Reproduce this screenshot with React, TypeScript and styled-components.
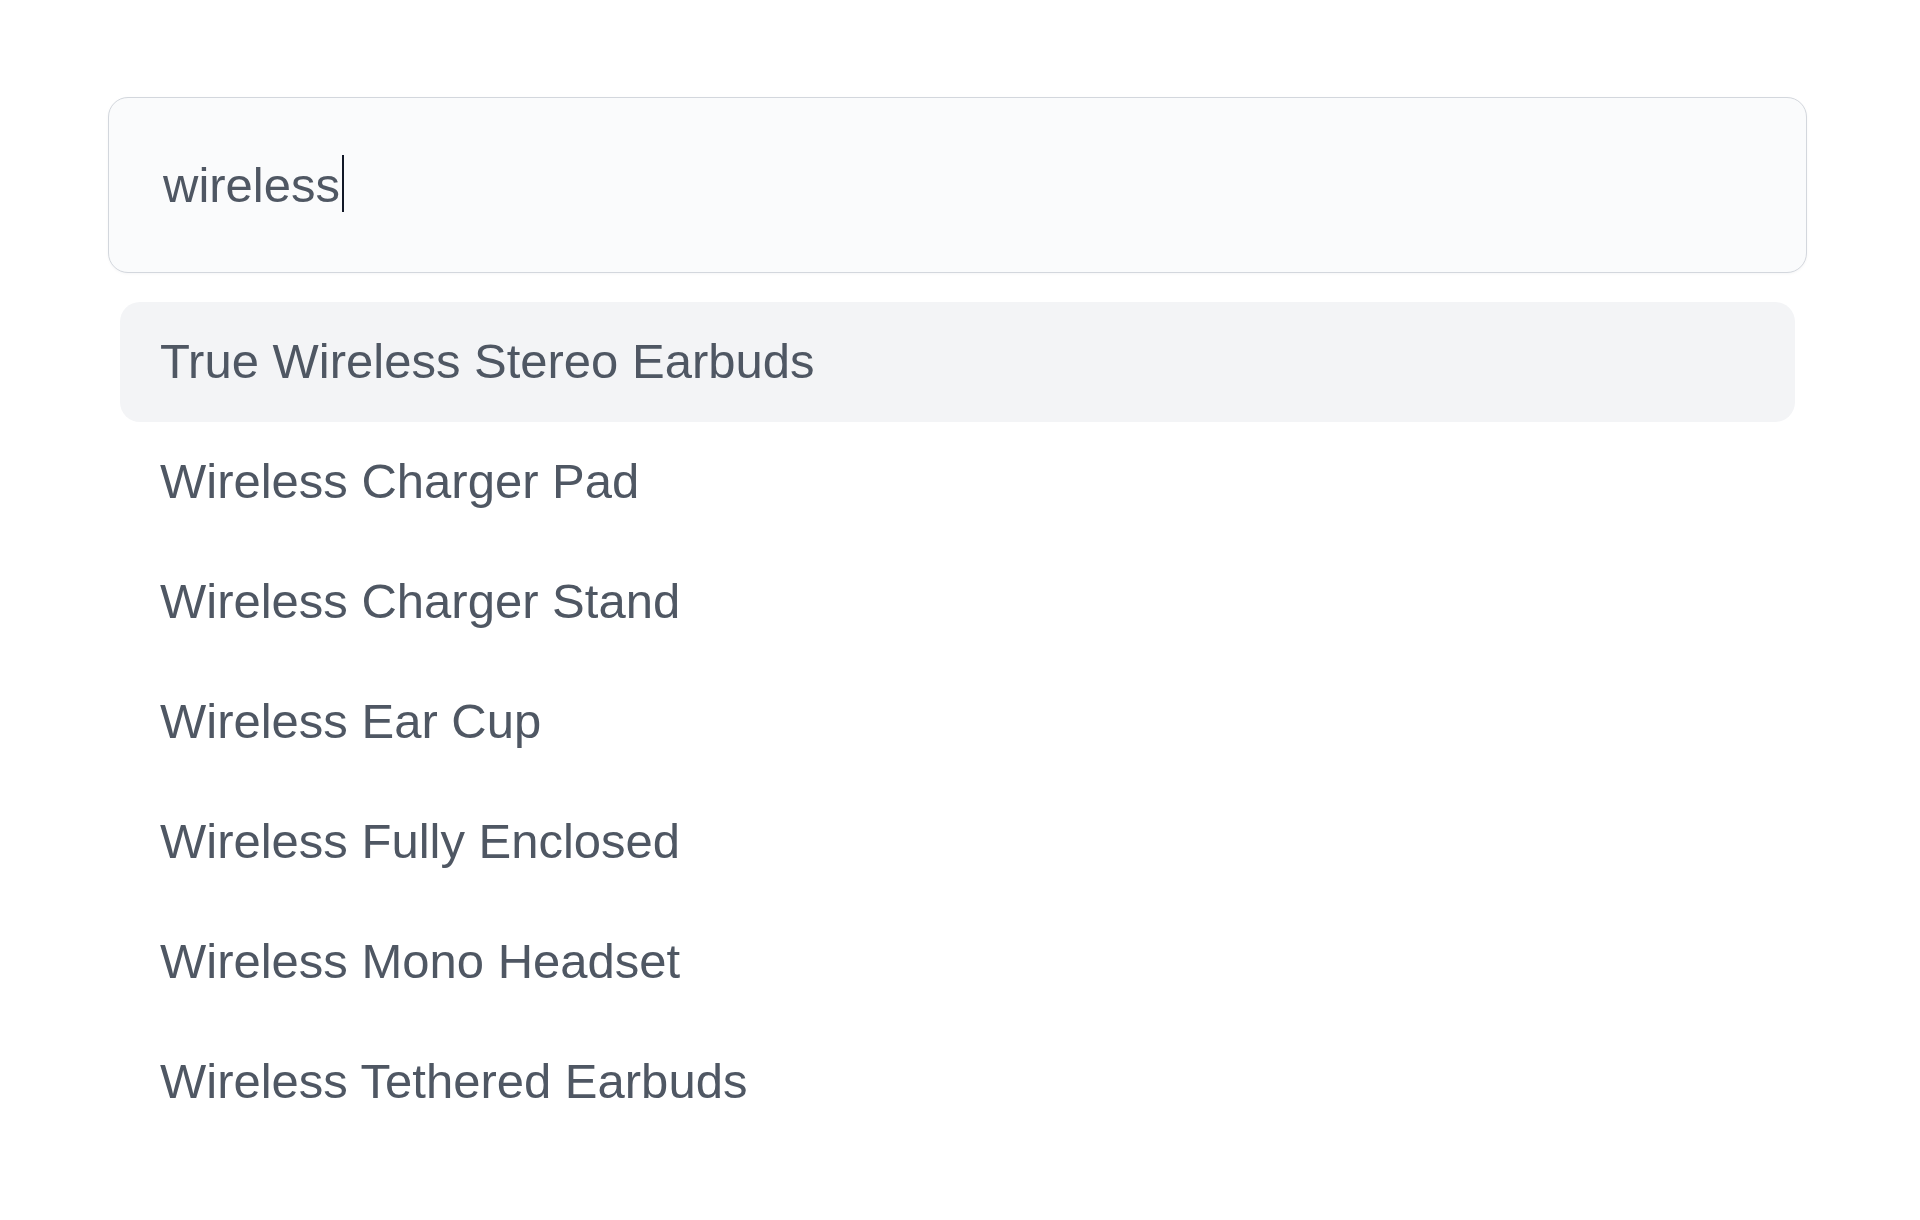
import React from "react";
import styled, { createGlobalStyle } from "styled-components";

const GlobalStyle = createGlobalStyle`
  html, body {
    margin: 0;
    padding: 0;
    background: #ffffff;
  }
  body {
    font-family: "Liberation Sans", Arial, sans-serif;
  }
`;

const Page = styled.div`
  width: 1920px;
  min-height: 1220px;
  padding: 97px 0 0 108px;
  box-sizing: border-box;
`;

const Combobox = styled.div`
  width: 1699px;
  display: flex;
  flex-direction: column;
  gap: 29px;
`;

const SearchBox = styled.div`
  height: 176px;
  box-sizing: border-box;
  display: flex;
  align-items: center;
  padding: 0 54px;
  border: 1px solid #d3d7dd;
  border-radius: 20px;
  background: #fafbfc;
  box-shadow: 0 1px 3px rgba(15, 23, 42, 0.04);
`;

const Query = styled.span`
  font-size: 49px;
  line-height: 56px;
  color: #4f5763;
`;

const Caret = styled.span`
  display: inline-block;
  width: 2px;
  height: 57px;
  margin-left: 2px;
  background: #111827;
  transform: translateY(-2px);
`;

const Options = styled.ul`
  list-style: none;
  margin: 0;
  padding: 0 12px;
  display: flex;
  flex-direction: column;
`;

const Option = styled.li<{ $active?: boolean }>`
  height: 120px;
  box-sizing: border-box;
  display: flex;
  align-items: center;
  padding: 0 40px 2px;
  border-radius: 20px;
  font-size: 49px;
  line-height: 56px;
  color: #4f5763;
  background: ${(p) => (p.$active ? "#f3f4f6" : "transparent")};
`;

const results = [
  "True Wireless Stereo Earbuds",
  "Wireless Charger Pad",
  "Wireless Charger Stand",
  "Wireless Ear Cup",
  "Wireless Fully Enclosed",
  "Wireless Mono Headset",
  "Wireless Tethered Earbuds",
];

export default function App() {
  return (
    <>
      <GlobalStyle />
      <Page>
        <Combobox>
          <SearchBox>
            <Query>wireless</Query>
            <Caret />
          </SearchBox>
          <Options>
            {results.map((r, i) => (
              <Option key={r} $active={i === 0}>
                {r}
              </Option>
            ))}
          </Options>
        </Combobox>
      </Page>
    </>
  );
}
